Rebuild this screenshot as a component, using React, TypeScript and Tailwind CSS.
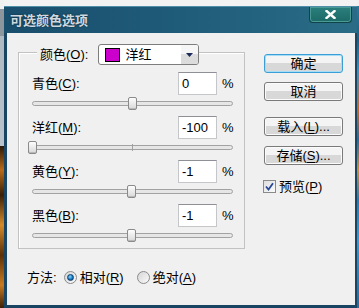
import React from "react";

const FONT = "font-['Liberation_Sans','Noto_Sans_CJK_SC',sans-serif]";

function U({ children }: { children: React.ReactNode }) {
  return <span className="underline underline-offset-[2px] decoration-[1px]">{children}</span>;
}

function Slider({ value }: { value: number }) {
  const center = ((value + 100) / 200) * 200;
  return (
    <div className="relative h-[17px] w-full">
      <div className="absolute left-0 right-0 top-[6px] h-[5px] rounded-full border border-[#a2a2a2] bg-[#e6e6e6]" />
      <div className="absolute left-[100px] top-[5px] h-[7px] w-px bg-[#a0a0a0]" />
      <div
        className="absolute top-[2px] h-[13px] w-[9px] rounded-[2px] border border-[#8a8a8a] bg-linear-to-b from-[#fdfdfd] to-[#d8d8d8] shadow-[inset_0_-1px_0_#b8b8b8]"
        style={{ left: center - 4.5 }}
      />
    </div>
  );
}

function Row({ label, letter, value }: { label: string; letter: string; value: string }) {
  const v = parseInt(value, 10);
  return (
    <div className="flex flex-col">
      <div className="flex h-[23px] items-center">
        <div className="flex-1 text-[13px] leading-none text-black">
          {label}(<U>{letter}</U>):
        </div>
        <div className="flex h-[23px] w-[39px] items-center border border-[#c4c6ca] border-t-[#8e9096] bg-white pl-[3px] text-[13px] leading-none text-black">
          {value}
        </div>
        <div className="ml-[5px] w-[11px] text-[13px] leading-none text-black">%</div>
      </div>
      <Slider value={v} />
    </div>
  );
}

function Btn({ children, def }: { children: React.ReactNode; def?: boolean }) {
  return (
    <div
      className={
        def
          ? "flex h-[19px] w-[79px] items-center justify-center rounded-[3px] border border-[#3a9fd6] bg-linear-to-b from-[#f4f4f4] from-50% to-[#d8d8d8] to-50% text-[13px] leading-none text-black shadow-[inset_0_0_0_1px_#a8ddf6]"
          : "flex h-[19px] w-[79px] items-center justify-center rounded-[3px] border border-[#7a7a7a] bg-linear-to-b from-[#f4f4f4] from-50% to-[#d8d8d8] to-50% text-[13px] leading-none text-black shadow-[inset_0_0_0_1px_#fbfbfb]"
      }
    >
      {children}
    </div>
  );
}

function Radio({ on }: { on?: boolean }) {
  return (
    <div className="flex h-[13px] w-[13px] items-center justify-center rounded-full border border-[#8a8a8a] bg-linear-to-br from-[#d6d6d6] to-[#fafafa]">
      {on ? (
        <div className="h-[7px] w-[7px] rounded-full border border-[#0b3f6e] bg-[radial-gradient(circle_at_40%_35%,#8fd8ff,#1470b8_60%,#0a4a86)]" />
      ) : null}
    </div>
  );
}

export default function App() {
  return (
    <div className={`flex h-[308px] w-[359px] overflow-hidden bg-[#f0f0f0] ${FONT}`}>
      {/* left strip (background behind dialog) */}
      <div className="h-full w-[4px] bg-[linear-gradient(to_bottom,#f0f0f0_0px,#f0f0f0_9px,#8d969d_9px,#8d969d_36px,#aeb9c2_36px,#b8c3cc_146px,#2a1a08_146px,#b86a18_170px,#3a2008_195px,#d48a2a_225px,#5a3008_255px,#c87a20_285px,#3a2008_308px)]" />

      {/* dialog column */}
      <div className="flex w-[353px] flex-col">
        <div className="h-[6px] bg-[#f2f2f2]" />
        {/* title bar */}
        <div className="flex h-[27px] items-start justify-between border-t border-[#4f8fa8] bg-linear-to-r from-[#194e6c] via-[#1f5c7a] to-[#2a6c86] pl-[6px] pr-[5px]">
          <div className="flex h-full items-center text-[13px] font-bold leading-none text-[#cfd8df] [text-shadow:0_0_2px_#0a2a3a]">
            可选颜色选项
          </div>
          <div className="flex h-[16px] w-[43px] items-center justify-center rounded-b-[4px] border border-t-0 border-[#0f4448] bg-linear-to-b from-[#2a7f7c] to-[#1d6a68] shadow-[inset_0_0_0_1px_#4a9a96]">
            <svg width="11" height="9" viewBox="0 0 11 9">
              <path d="M1.5 1 L9.5 8 M9.5 1 L1.5 8" stroke="#ffffff" strokeWidth="2.4" strokeLinecap="square" />
            </svg>
          </div>
        </div>

        {/* dialog body */}
        <div className="flex h-[275px] border-b-[3px] border-l-[3px] border-r-[2px] border-[#1a4562] bg-[#f0f0f0] pl-[11px]">
          {/* left column */}
          <div className="flex w-[227px] flex-col pt-[19px]">
            <div className="relative border border-[#c2c2c2] pb-[4px] pl-[13px] pr-[11px] pt-[19px] shadow-[inset_1px_1px_0_#ffffff]">
              {/* legend with dropdown */}
              <div className="absolute -top-[9px] left-[18px] flex h-[21px] items-center gap-[10px] bg-[#f0f0f0] pl-[3px]">
                <div className="text-[13px] leading-none text-black">
                  颜色(<U>O</U>):
                </div>
                <div className="flex h-[21px] w-[101px] items-center rounded-[3px] border border-[#7d7d7d] bg-white">
                  <div className="ml-[6px] h-[14px] w-[15px] border border-black bg-[#cc00cc]" />
                  <div className="ml-[5px] text-[13px] leading-none text-black">洋红</div>
                  <div className="ml-auto flex h-full w-[17px] items-center justify-center rounded-r-[2px] bg-linear-to-b from-[#f6f6f6] from-50% to-[#dcdcdc] to-50%">
                    <svg width="7" height="4" viewBox="0 0 7 4">
                      <path d="M0 0 L7 0 L3.5 4 Z" fill="#1c2b5a" />
                    </svg>
                  </div>
                </div>
              </div>

              <div className="flex flex-col gap-[4px]">
                <Row label="青色" letter="C" value="0" />
                <Row label="洋红" letter="M" value="-100" />
                <Row label="黄色" letter="Y" value="-1" />
                <Row label="黑色" letter="B" value="-1" />
              </div>
            </div>

            {/* method */}
            <div className="mt-[22px] flex items-center pl-[9px] text-[13px] leading-none text-black">
              <span>方法:</span>
              <div className="ml-[7px]">
                <Radio on />
              </div>
              <span className="ml-[3px]">
                相对(<U>R</U>)
              </span>
              <div className="ml-[13px]">
                <Radio />
              </div>
              <span className="ml-[3px]">
                绝对(<U>A</U>)
              </span>
            </div>
          </div>

          {/* right column */}
          <div className="ml-[19px] flex flex-col pt-[21px]">
            <Btn def>确定</Btn>
            <div className="mt-[9px]">
              <Btn>取消</Btn>
            </div>
            <div className="mt-[16px]">
              <Btn>
                载入(<U>L</U>)...
              </Btn>
            </div>
            <div className="mt-[10px]">
              <Btn>
                存储(<U>S</U>)...
              </Btn>
            </div>
            <div className="-ml-[1px] mt-[15px] flex items-center text-[13px] leading-none text-black">
              <div className="flex h-[13px] w-[13px] items-center justify-center border border-[#8a8a8a] bg-linear-to-br from-[#dedede] to-[#fbfbfb]">
                <svg width="9" height="9" viewBox="0 0 9 9">
                  <path d="M1 4.5 L3.5 7.5 L8 1.2" stroke="#28479a" strokeWidth="1.8" fill="none" />
                </svg>
              </div>
              <span className="ml-[3px]">
                预览(<U>P</U>)
              </span>
            </div>
          </div>
        </div>
      </div>

      {/* right strip */}
      <div className="h-full w-[2px] bg-[linear-gradient(to_bottom,#f0f0f0_0px,#f0f0f0_6px,#2a7a9a_6px,#1c5f84_40px,#3a90c0_70px,#c86a20_110px,#2a6a9a_140px,#d09030_170px,#2a7ab0_200px,#3a9ad0_240px,#2a6a9a_308px)]" />
    </div>
  );
}
